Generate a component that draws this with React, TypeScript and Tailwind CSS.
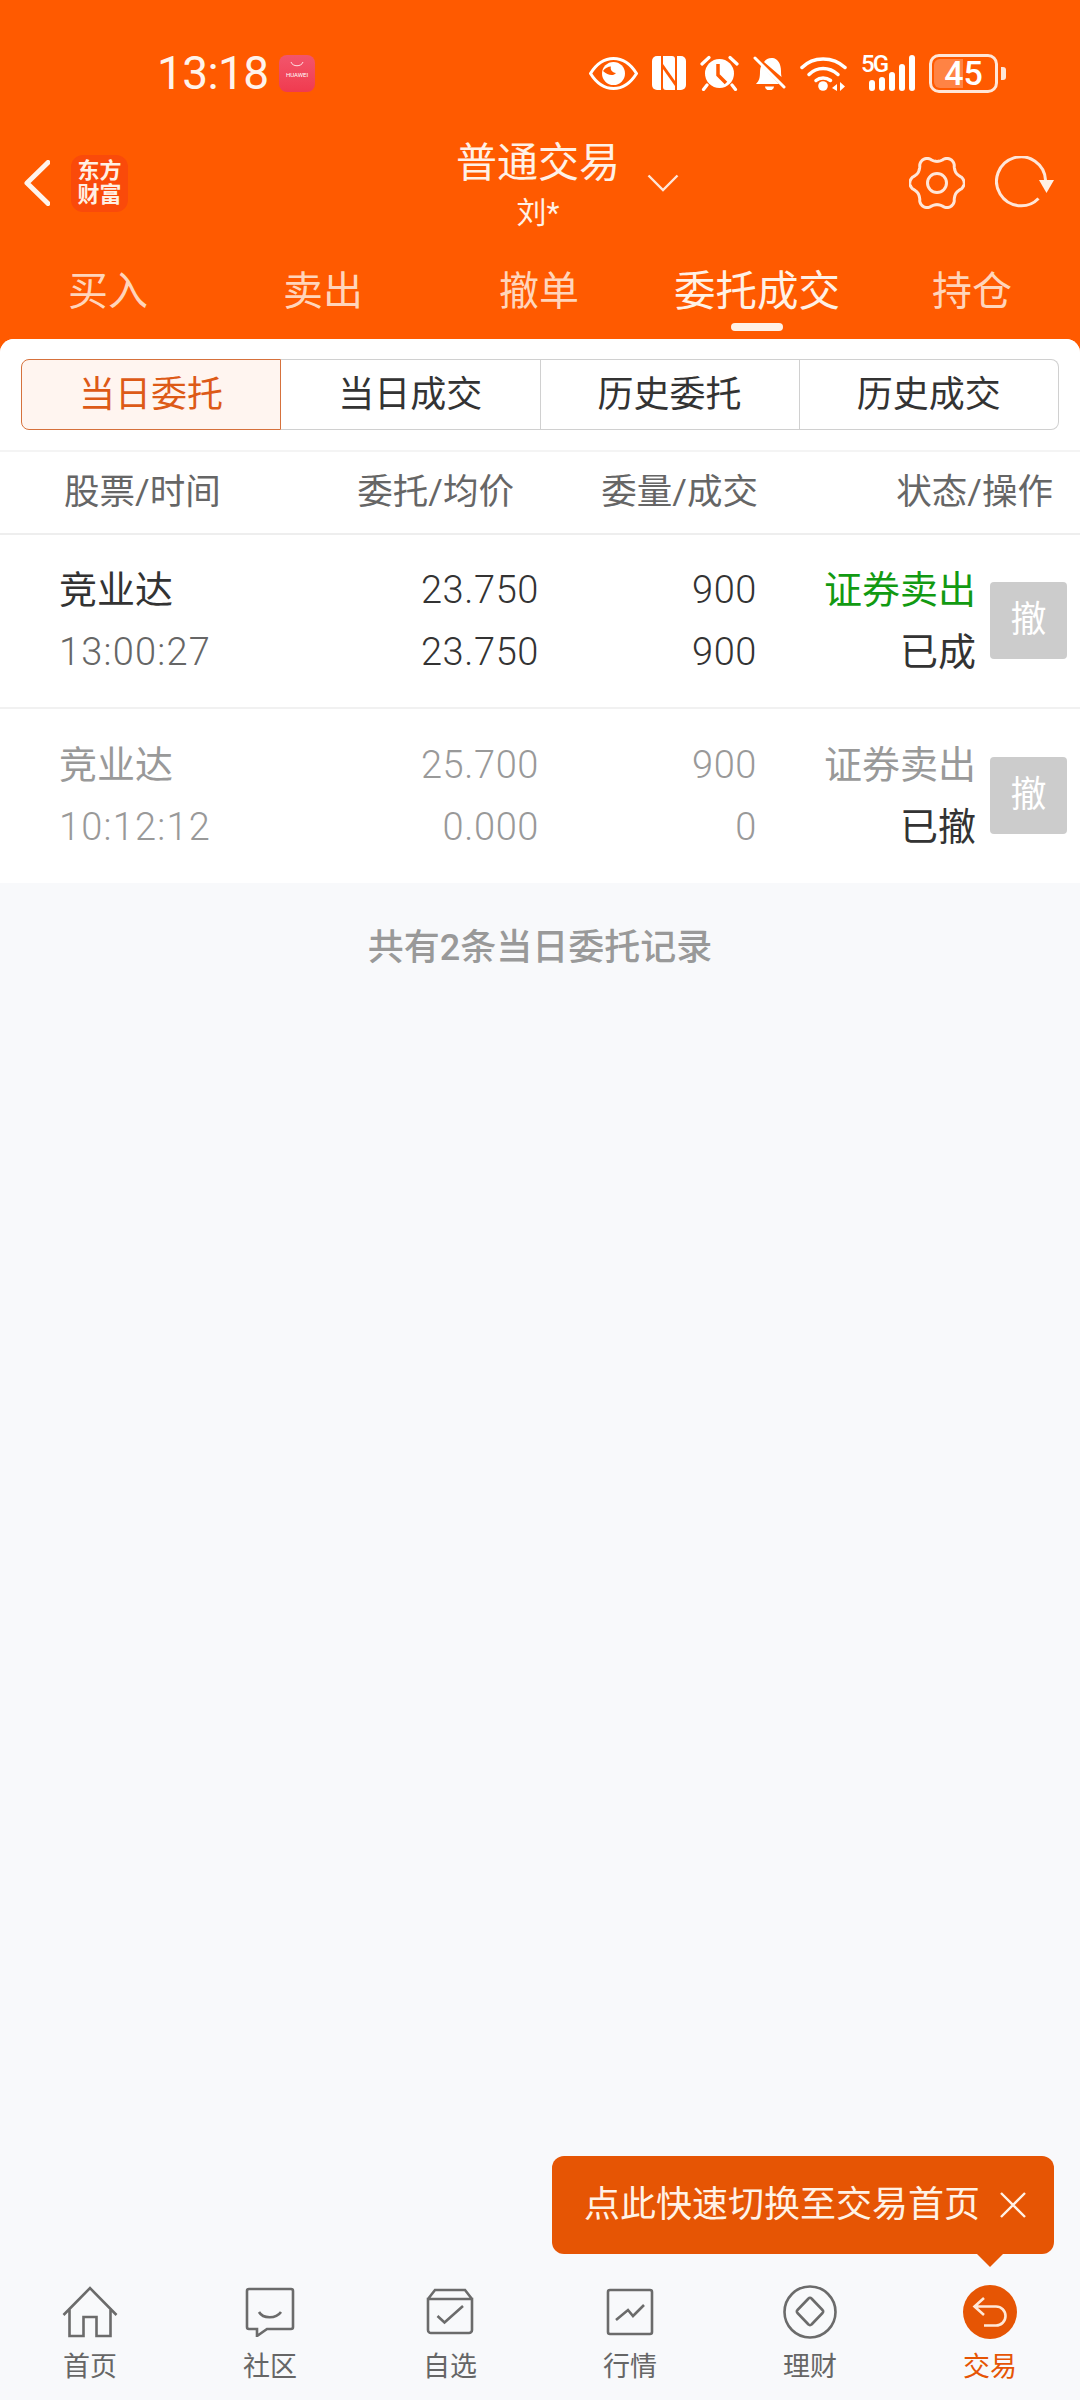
import React from "react";

const FONT = "font-['Roboto','Noto_Sans_CJK_SC',sans-serif]";

function gearPath() {
  const pts: string[] = [];
  const n = 180;
  for (let i = 0; i <= n; i++) {
    const t = (i / n) * Math.PI * 2;
    const c = Math.cos(6 * t + Math.PI);
    const r = 24.4 + 2.8 * Math.sign(c) * Math.pow(Math.abs(c), 0.8);
    pts.push(`${(28 + r * Math.sin(t)).toFixed(2)} ${(27 + r * Math.cos(t)).toFixed(2)}`);
  }
  return "M" + pts.join("L") + "Z";
}

const Eye = () => (
  <svg width="49" height="33" viewBox="0 0 49 33" fill="none">
    <path d="M1.5 16.5C8 6 16 1.5 24.5 1.5S41 6 47.5 16.5C41 27 33 31.5 24.5 31.5S8 27 1.5 16.5Z" stroke="#fff" strokeWidth="3" />
    <circle cx="24.5" cy="16.5" r="11.5" fill="#fff" />
    <path d="M14 14c2-3 5-4.5 8-4.5-1 3 1 6 5 6.5-2 3-8 3-13-2Z" fill="#ff5a00" />
  </svg>
);
const Nfc = () => (
  <svg width="34" height="34" viewBox="0 0 34 34">
    <path d="M5 0h4v34H5a5 5 0 0 1-5-5V5a5 5 0 0 1 5-5Z" fill="#fff" />
    <path d="M25 0h4a5 5 0 0 1 5 5v24a5 5 0 0 1-5 5h-4Z" fill="#fff" />
    <path d="M11 0h9c2 0 3 1 3 3v22L11 8Z" fill="#fff" />
    <path d="M11 13l12 17v4h-9c-2 0-3-1-3-3Z" fill="#fff" />
  </svg>
);
const Alarm = () => (
  <svg width="39" height="36" viewBox="0 0 39 36" fill="none">
    <circle cx="19.5" cy="18.5" r="14.5" fill="#fff" />
    <path d="M18 9v11l8 8" stroke="#ff5a00" strokeWidth="3.5" />
    <path d="M2 9 9 2.5M37 9l-7-6.500M7 30l-3.500 4.500M32 30l3.500 4.500" stroke="#fff" strokeWidth="3.200" strokeLinecap="round" />
  </svg>
);
const Bell = () => (
  <svg width="33" height="34" viewBox="0 0 33 34" fill="none">
    <path d="M3 28c3-3 4-6 4-12 0-3 .5-5 1.500-6.500L26 28Z" fill="#fff" />
    <path d="M11 6c2-3 5-4.500 9-4 5 1 8 6 8 13 0 2 0 4 .5 6Z" fill="#fff" />
    <path d="M2 2l29 29" stroke="#fff" strokeWidth="3" strokeLinecap="round" />
    <path d="M12 30.500h9a4.500 4 0 0 1-9 0Z" fill="#fff" />
  </svg>
);
const Wifi = () => (
  <svg width="47" height="36" viewBox="0 0 47 36" fill="none">
    <path d="M2 12.500C13 1 33 1 45 12.500" stroke="#fff" strokeWidth="3.500" strokeLinecap="round" />
    <path d="M9 19.500C17 11.500 29 11.500 38 19.500" stroke="#fff" strokeWidth="3.500" strokeLinecap="round" />
    <path d="M16 25.500c4-3.500 10-3.500 14.500 0" stroke="#fff" strokeWidth="3.500" strokeLinecap="round" />
    <circle cx="23" cy="31" r="4.800" fill="#fff" />
    <path d="M37 29l-5 4 5 3ZM40 27v9l5-4.500Z" fill="#fff" />
  </svg>
);
const Signal = () => (
  <div className="relative w-[54px] h-[36px]">
    <span className="absolute left-0 top-[-4px] text-[24px] leading-[26px] font-medium text-white font-['Roboto',sans-serif] tracking-[-2px]">5G</span>
    <svg className="absolute left-0 top-0" width="54" height="36" viewBox="0 0 54 36">
      <rect x="8" y="25" width="6" height="11" rx="3" fill="#fff" />
      <rect x="18" y="22" width="6" height="14" rx="3" fill="#fff" />
      <rect x="28" y="17" width="6" height="19" rx="3" fill="#fff" />
      <rect x="38" y="9" width="6" height="27" rx="3" fill="#fff" />
      <rect x="48" y="0" width="6" height="36" rx="3" fill="#fff" />
    </svg>
  </div>
);
const Battery = () => (
  <div className="flex items-center gap-[3px]">
    <div className="relative w-[69px] h-[39px] rounded-[10px] border-[3px] border-[#ffe6d8]">
      <div className="absolute left-[2px] top-[2px] bottom-[2px] w-[29px] rounded-l-[6px] bg-[#ff8344]" />
      <span className="absolute inset-0 flex items-center justify-center text-[34px] leading-none font-medium text-white font-['Roboto',sans-serif]">45</span>
    </div>
    <div className="w-[5px] h-[13px] rounded-r-[3px] bg-[#ffe6d8]" />
  </div>
);

const Tab = ({ text, ml, active }: { text: string; ml: string; active?: boolean }) => (
  <div className={`flex flex-col items-center ${ml}`}>
    <span className={`leading-[44px] whitespace-nowrap ${active ? "text-[41.500px] text-[#fff1e6]" : "text-[40px] text-[#ffd5bb]"}`}>{text}</span>
    <div className={`mt-[9px] w-[52px] h-[8px] rounded-full ${active ? "bg-[#fff1e6]" : "bg-transparent"}`} />
  </div>
);

const Seg = ({ text, cls }: { text: string; cls: string }) => (
  <div className={`flex-1 h-full flex items-center justify-center text-[36px] leading-none ${cls}`}>{text}</div>
);

const HeadCell = ({ text, cls }: { text: string; cls: string }) => (
  <div className={`${cls} text-[35.500px] leading-none text-[#666666] whitespace-nowrap`}>{text}</div>
);

type RowP = { name: string; time: string; p1: string; p2: string; q1: string; q2: string; side: string; status: string; dim?: boolean };

const Row = ({ name, time, p1, p2, q1, q2, side, status, dim }: RowP) => {
  const main = dim ? "text-[#999999]" : "text-[#333333]";
  return (
    <div className="flex items-center h-[174px] border-b-2 border-[#f1f1f1] last:border-b-0 text-[38px] leading-[62px] whitespace-nowrap">
      <div className="w-[320px] pl-[59px] flex flex-col">
        <span className={main}>{name}</span>
        <span className={`font-light tracking-[1.200px] ${dim ? "text-[#999999]" : "text-[#666666]"}`}>{time}</span>
      </div>
      <div className={`w-[219px] text-right flex flex-col font-light tracking-[0.600px] ${main}`}>
        <span>{p1}</span>
        <span>{p2}</span>
      </div>
      <div className={`w-[218px] text-right flex flex-col font-light tracking-[0.600px] ${main}`}>
        <span>{q1}</span>
        <span>{q2}</span>
      </div>
      <div className="w-[219px] text-right flex flex-col">
        <span className={dim ? "text-[#999999]" : "text-[#129a12]"}>{side}</span>
        <span className="text-[#333333]">{status}</span>
      </div>
      <button className="ml-[14px] -mt-[2px] w-[77px] h-[77px] rounded-[4px] bg-[#cccccc] text-white text-[36px] flex items-center justify-center">撤</button>
    </div>
  );
};

const NavItem = ({ label, icon, active }: { label: string; icon: React.ReactNode; active?: boolean }) => (
  <div className="flex-1 flex flex-col items-center">
    <div className="h-[54px] flex items-center justify-center">{icon}</div>
    <span className={`mt-[12px] text-[27px] leading-[32px] ${active ? "text-[#e65504]" : "text-[#666666]"}`}>{label}</span>
  </div>
);

const S = { stroke: "#6b6b6b", strokeWidth: 2.6, fill: "none" } as const;

export default function App() {
  return (
    <div className={`relative w-[1080px] h-[2400px] overflow-hidden flex flex-col bg-[#ff5a00] ${FONT}`}>
      {/* status bar */}
      <div className="h-[138px] pt-[53px] shrink-0">
        <div className="h-[40px] flex items-center pl-[157px]">
          <span className="text-[46px] leading-none text-[#fff4ec] w-[110px] tracking-[-0.6px] font-['Roboto',sans-serif]">13:18</span>
          <div className="ml-[12px] w-[36px] h-[37px] rounded-[8px] bg-gradient-to-b from-[#f2556c] to-[#f03a4f] flex flex-col items-center">
            <svg width="14" height="7" viewBox="0 0 14 7" className="mt-[6px]"><path d="M1 1c1.500 5 10.500 5 12 0" stroke="#ffe3e6" strokeWidth="1" fill="none" /></svg>
            <span className="text-[6px] leading-[8px] mt-[3px] text-white font-['Roboto',sans-serif]">HUAWEI</span>
          </div>
          <div className="ml-auto pr-[74px] flex items-center gap-[14px]">
            <Eye />
            <Nfc />
            <Alarm />
            <Bell />
            <Wifi />
            <Signal />
            <Battery />
          </div>
        </div>
      </div>

      {/* title row */}
      <div className="h-[90px] flex items-center shrink-0 text-[#fff1e6]">
        <svg width="27" height="46" viewBox="0 0 27 46" fill="none" className="ml-[23px]">
          <path d="M25 2.500 4 23l21 20.500" stroke="#fff4ec" strokeWidth="5" strokeLinecap="round" strokeLinejoin="round" />
        </svg>
        <div className="ml-[21px] w-[57px] h-[57px] rounded-[12px] bg-[#fa4a0a] flex flex-col items-center justify-center text-[#fff0e4] font-bold text-[22px] leading-[24px]">
          <span>东方</span>
          <span>财富</span>
        </div>
        <div className="ml-[330px] mt-[4px] w-[160px] flex flex-col items-center">
          <span className="text-[41px] leading-[44px] whitespace-nowrap">普通交易</span>
          <span className="mt-[11px] text-[30px] leading-[34px] whitespace-nowrap">刘*</span>
        </div>
        <svg width="32" height="18" viewBox="0 0 32 18" fill="none" className="ml-[29px]">
          <path d="M1.500 1.500 16 16 30.500 1.500" stroke="#ffe6d8" strokeWidth="2.400" />
        </svg>
        <svg width="56" height="54" viewBox="0 0 56 54" fill="none" className="ml-[230px]">
          <path d={gearPath()} stroke="#ffe6d8" strokeWidth="3" strokeLinejoin="round" />
          <circle cx="28" cy="27" r="9.500" stroke="#ffe6d8" strokeWidth="3" />
        </svg>
        <svg width="60" height="54" viewBox="0 0 60 54" fill="none" className="ml-[30px]">
          <path d="M50.500 24A24.500 24.500 0 1 0 43.500 42.500" stroke="#ffe6d8" strokeWidth="3" />
          <path d="M44 24h15l-7.500 13Z" fill="#fff1e6" />
        </svg>
      </div>

      {/* tabs */}
      <div className="h-[111px] shrink-0 pt-[42px] flex items-start">
        <Tab text="买入" ml="ml-[68px]" />
        <Tab text="卖出" ml="ml-[135px]" />
        <Tab text="撤单" ml="ml-[136px]" />
        <Tab text="委托成交" ml="ml-[95px]" active />
        <Tab text="持仓" ml="ml-[92px]" />
      </div>

      {/* content */}
      <div className="flex-1 rounded-t-[14px] bg-[#f8f9fb] flex flex-col overflow-hidden">
        <div className="bg-white">
          <div className="pt-[20px] pb-[20px] px-[21px] border-b-2 border-[#f4f4f4]">
            <div className="h-[71px] flex">
              <Seg text="当日委托" cls="rounded-l-[8px] border border-[#d6713c] bg-[#fff5f0] text-[#dd5a17]" />
              <Seg text="当日成交" cls="border-y border-r border-[#d0d0d0] text-[#333333]" />
              <Seg text="历史委托" cls="border-y border-r border-[#d0d0d0] text-[#333333]" />
              <Seg text="历史成交" cls="rounded-r-[8px] border-y border-r border-[#d0d0d0] text-[#333333]" />
            </div>
          </div>
          <div className="h-[83px] flex items-center border-b-2 border-[#eeeeee]">
            <HeadCell text="股票/时间" cls="w-[320px] pl-[64px]" />
            <HeadCell text="委托/均价" cls="w-[194px] text-right" />
            <HeadCell text="委量/成交" cls="w-[244px] text-right" />
            <HeadCell text="状态/操作" cls="w-[295px] text-right" />
          </div>
          <Row name="竞业达" time="13:00:27" p1="23.750" p2="23.750" q1="900" q2="900" side="证券卖出" status="已成" />
          <Row name="竞业达" time="10:12:12" p1="25.700" p2="0.000" q1="900" q2="0" side="证券卖出" status="已撤" dim />
        </div>
        <div className="mt-[43px] text-center text-[36px] leading-[44px] font-medium text-[#999999]">共有2条当日委托记录</div>

        {/* bottom nav */}
        <div className="mt-auto flex h-[115px]">
          <NavItem label="首页" icon={
            <svg width="56" height="52" viewBox="0 0 56 52" {...S}><path d="M1.500 29 28 2l26.500 27M7.500 22v28H21.500V31H34.500V50H48.500V22" /></svg>
          } />
          <NavItem label="社区" icon={
            <svg width="50" height="50" viewBox="0 0 50 50" {...S}><path d="M4 2h42a2 2 0 0 1 2 2v36a2 2 0 0 1-2 2H22l-10 7v-7H4a2 2 0 0 1-2-2V4a2 2 0 0 1 2-2Z" /><path d="M14 25c4 7 17 7 22 0" /></svg>
          } />
          <NavItem label="自选" icon={
            <svg width="48" height="48" viewBox="0 0 48 48" {...S}><path d="M2 11 9 2h30l7 9M2 11h44v31a3 3 0 0 1-3 3H5a3 3 0 0 1-3-3Z" /><path d="M11.500 28l7 6.500L37 18" /></svg>
          } />
          <NavItem label="行情" icon={
            <svg width="48" height="48" viewBox="0 0 48 48" {...S}><rect x="2" y="2" width="44" height="44" rx="2" /><path d="M10 32l12-10 5 6 11-11" /></svg>
          } />
          <NavItem label="理财" icon={
            <svg width="54" height="54" viewBox="0 0 54 54" {...S}><circle cx="27" cy="27" r="25.500" /><path d="M25.500 13.500a2 2 0 0 1 3 0l11 11.500a2 2 0 0 1 0 3l-11 11.500a2 2 0 0 1-3 0l-11-11.500a2 2 0 0 1 0-3Z" /></svg>
          } />
          <NavItem label="交易" active icon={
            <svg width="54" height="54" viewBox="0 0 54 54" fill="none"><circle cx="27" cy="27" r="27" fill="#e65504" /><path d="M21 13l-9.500 8.500L21 30M11.500 21.500H33a9.500 9.500 0 0 1 0 19H21" stroke="#ffe8d8" strokeWidth="2.600" /></svg>
          } />
        </div>
      </div>

      {/* tooltip */}
      <div className="absolute left-[552px] top-[2156px] w-[502px] h-[98px] rounded-[12px] bg-[#e65504] flex items-center pl-[32px] text-[#fff2e6]">
        <span className="text-[36px] leading-none whitespace-nowrap">点此快速切换至交易首页</span>
        <svg width="28" height="28" viewBox="0 0 28 28" className="ml-[19px]" stroke="#fff2e6" strokeWidth="2.400"><path d="M2 2l24 24M26 2 2 26" /></svg>
        <div className="absolute left-[425px] top-[98px] w-0 h-0 border-l-[13px] border-r-[13px] border-t-[13px] border-l-transparent border-r-transparent border-t-[#e65504]" />
      </div>
    </div>
  );
}
